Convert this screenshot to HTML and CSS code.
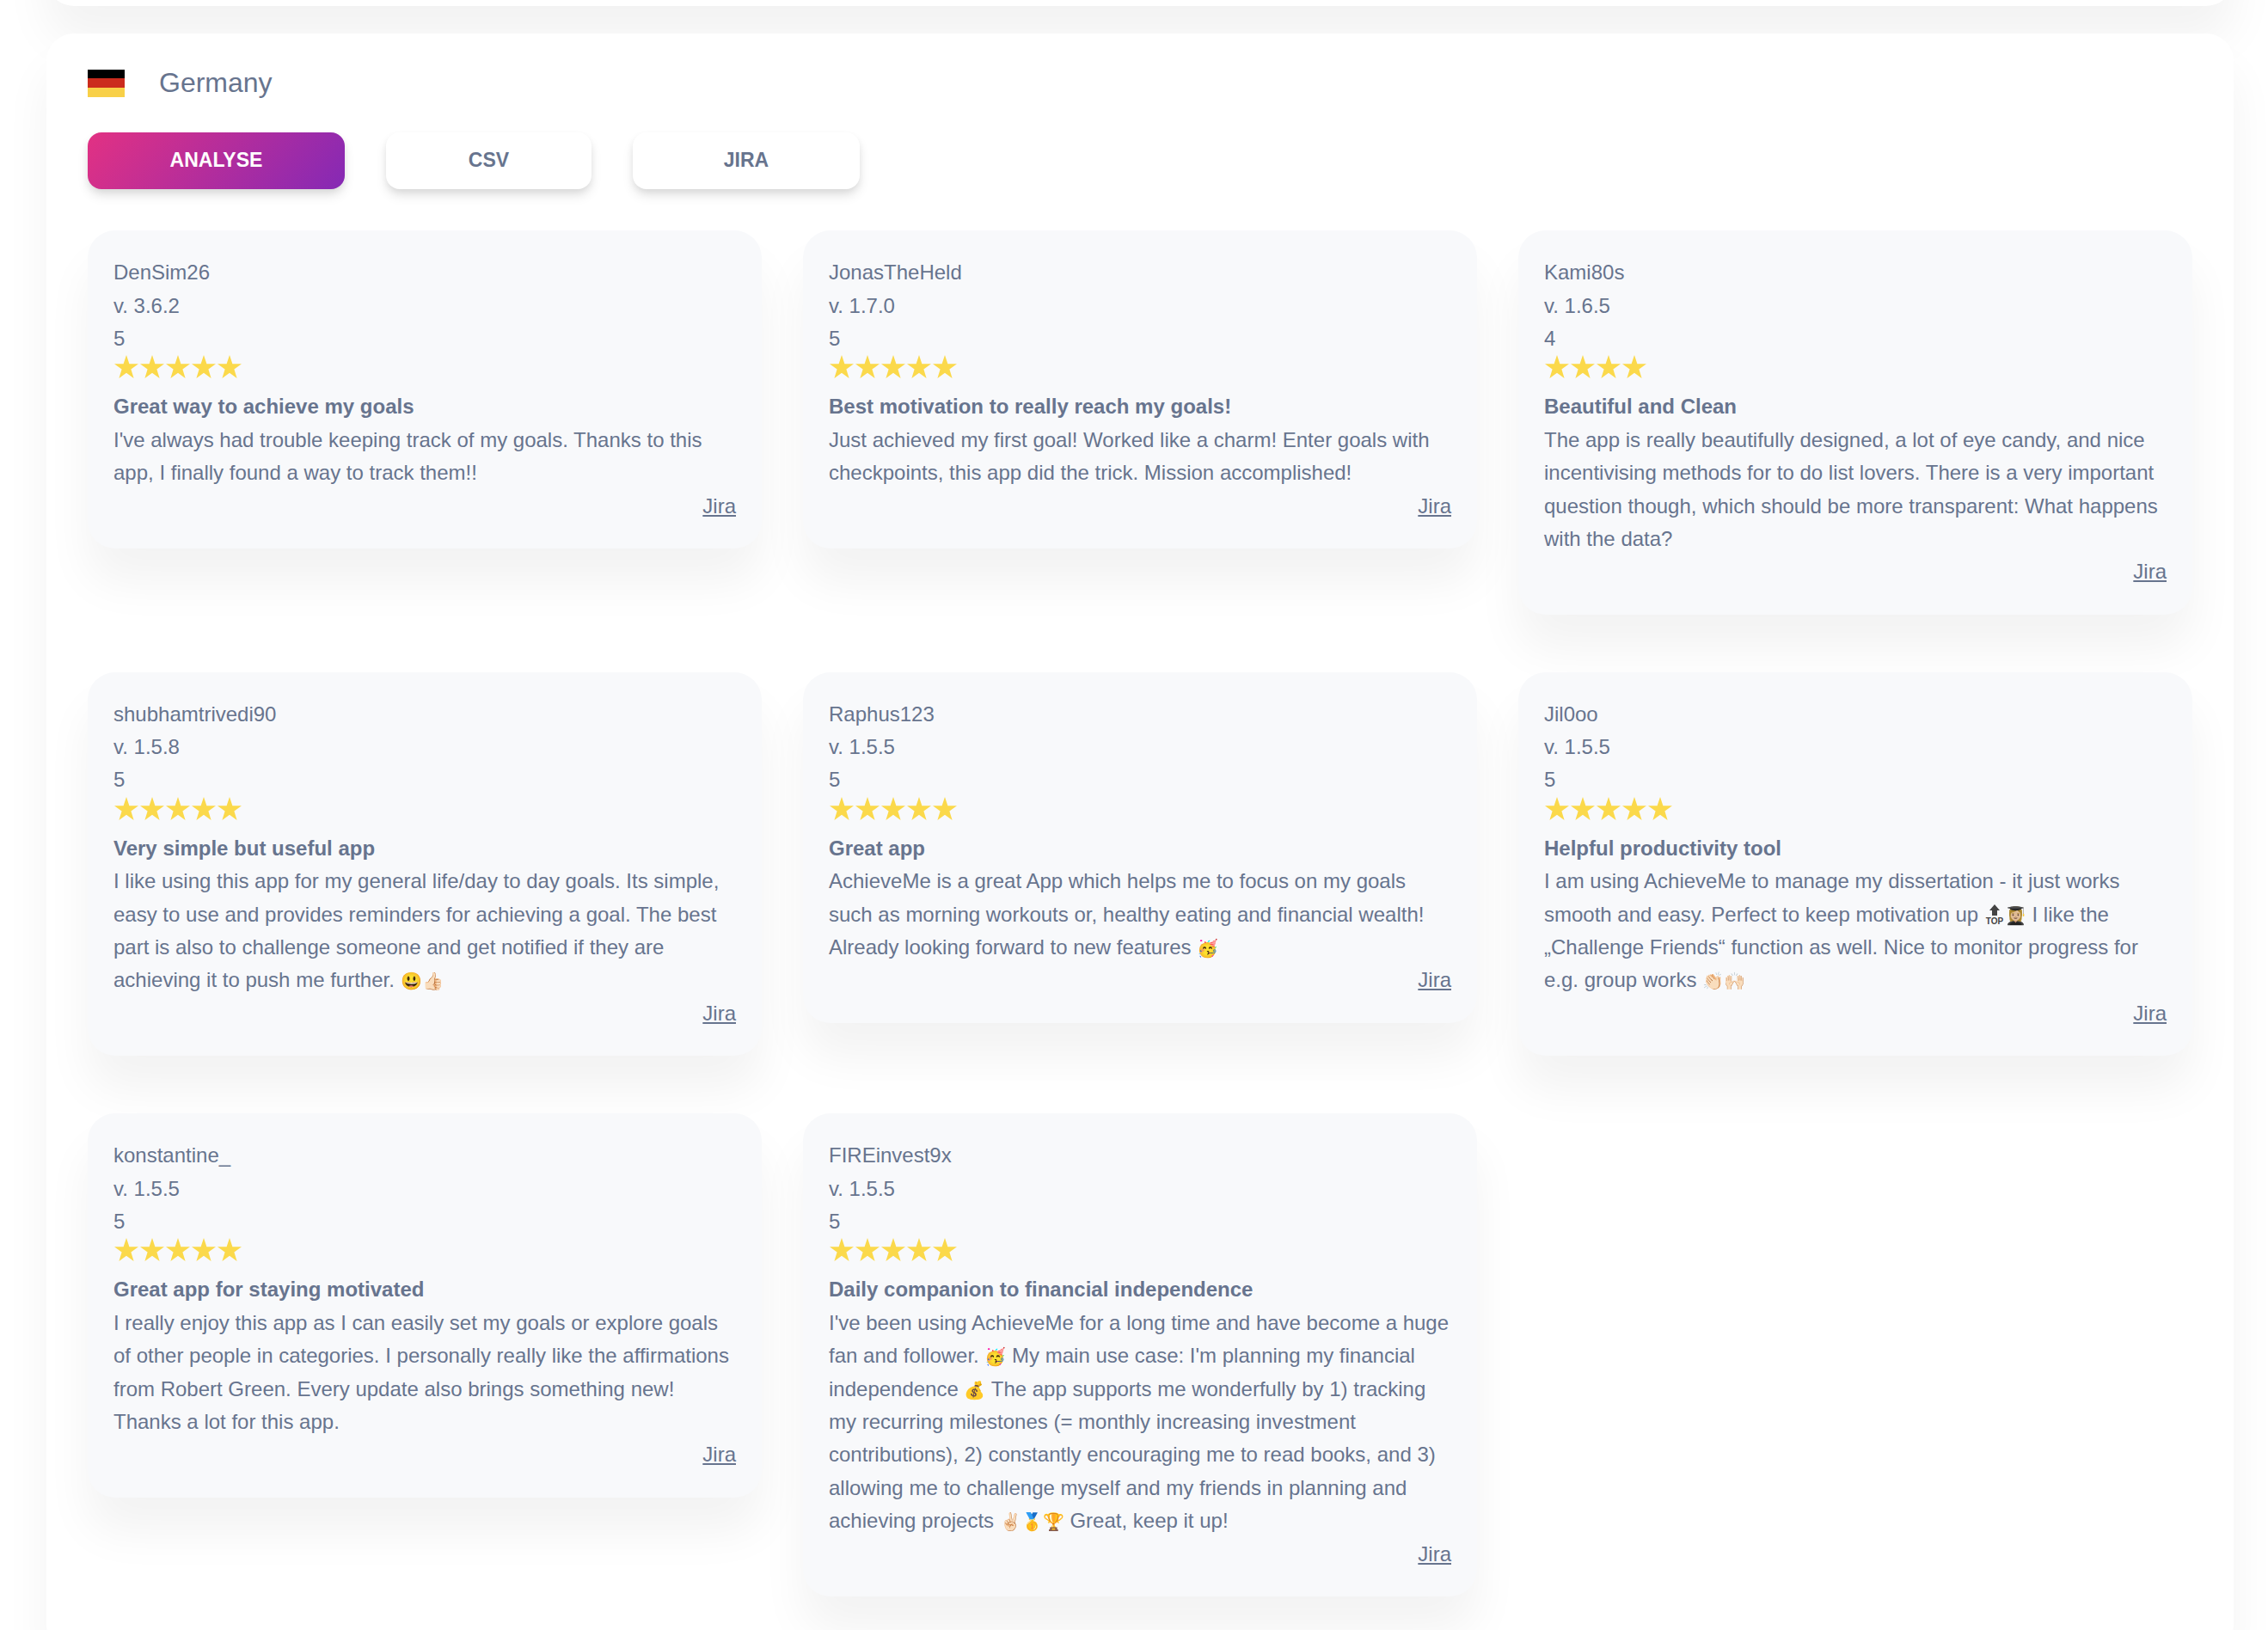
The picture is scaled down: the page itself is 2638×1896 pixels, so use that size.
FILE: index.html
```
<!DOCTYPE html>
<html lang="en">
<head>
    <meta charset="UTF-8">
    <meta name="viewport" content="width=device-width, initial-scale=1.0">
    <title>App Reviews</title>
    <link rel="stylesheet" href="styles.css">
</head>
<body>
    <svg class="sprite" aria-hidden="true">
        <symbol id="star" viewBox="0 0 28 27">
            <path d="M14 0 L17.4 10.2 H28 L19.4 16.6 L22.6 27 L14 20.7 L5.4 27 L8.6 16.6 L0 10.2 H10.6 Z"/>
        </symbol>
    </svg>

    <section class="panel panel-previous"></section>

    <section class="panel">
        <header class="country">
            <svg class="flag" viewBox="0 0 43 32" role="img" aria-label="Flag of Germany">
                <rect width="43" height="32" fill="#f8d048"/>
                <rect width="43" height="21" fill="#cb2b1d"/>
                <rect width="43" height="10" fill="#000"/>
            </svg>
            <h2 class="country-name">Germany</h2>
        </header>

        <div class="actions">
            <button class="btn btn-primary" type="button">ANALYSE</button>
            <button class="btn btn-csv" type="button">CSV</button>
            <button class="btn btn-jira" type="button">JIRA</button>
        </div>

        <div class="reviews">
            <article class="card">
                <div>DenSim26</div>
                <div>v. 3.6.2</div>
                <div>5</div>
                <div class="stars"><svg><use href="#star"/></svg><svg><use href="#star"/></svg><svg><use href="#star"/></svg><svg><use href="#star"/></svg><svg><use href="#star"/></svg></div>
                <h3 class="card-title">Great way to achieve my goals</h3>
                <p class="card-text">I've always had trouble keeping track of my goals. Thanks to this app, I finally found a way to track them!!</p>
                <div class="card-link"><a href="#">Jira</a></div>
            </article>

            <article class="card">
                <div>JonasTheHeld</div>
                <div>v. 1.7.0</div>
                <div>5</div>
                <div class="stars"><svg><use href="#star"/></svg><svg><use href="#star"/></svg><svg><use href="#star"/></svg><svg><use href="#star"/></svg><svg><use href="#star"/></svg></div>
                <h3 class="card-title">Best motivation to really reach my goals!</h3>
                <p class="card-text">Just achieved my first goal! Worked like a charm! Enter goals with checkpoints, this app did the trick. Mission accomplished!</p>
                <div class="card-link"><a href="#">Jira</a></div>
            </article>

            <article class="card">
                <div>Kami80s</div>
                <div>v. 1.6.5</div>
                <div>4</div>
                <div class="stars"><svg><use href="#star"/></svg><svg><use href="#star"/></svg><svg><use href="#star"/></svg><svg><use href="#star"/></svg></div>
                <h3 class="card-title">Beautiful and Clean</h3>
                <p class="card-text">The app is really beautifully designed, a lot of eye candy, and nice incentivising methods for to do list lovers. There is a very important question though, which should be more transparent: What happens with the data?</p>
                <div class="card-link"><a href="#">Jira</a></div>
            </article>

            <article class="card">
                <div>shubhamtrivedi90</div>
                <div>v. 1.5.8</div>
                <div>5</div>
                <div class="stars"><svg><use href="#star"/></svg><svg><use href="#star"/></svg><svg><use href="#star"/></svg><svg><use href="#star"/></svg><svg><use href="#star"/></svg></div>
                <h3 class="card-title">Very simple but useful app</h3>
                <p class="card-text">I like using this app for my general life/day to day goals. Its simple, easy to use and provides reminders for achieving a goal. The best part is also to challenge someone and get notified if they are achieving it to push me further. <span class="emoji">😃👍🏻</span></p>
                <div class="card-link"><a href="#">Jira</a></div>
            </article>

            <article class="card">
                <div>Raphus123</div>
                <div>v. 1.5.5</div>
                <div>5</div>
                <div class="stars"><svg><use href="#star"/></svg><svg><use href="#star"/></svg><svg><use href="#star"/></svg><svg><use href="#star"/></svg><svg><use href="#star"/></svg></div>
                <h3 class="card-title">Great app</h3>
                <p class="card-text">AchieveMe is a great App which helps me to focus on my goals such as morning workouts or, healthy eating and financial wealth! Already looking forward to new features <span class="emoji">🥳</span></p>
                <div class="card-link"><a href="#">Jira</a></div>
            </article>

            <article class="card">
                <div>Jil0oo</div>
                <div>v. 1.5.5</div>
                <div>5</div>
                <div class="stars"><svg><use href="#star"/></svg><svg><use href="#star"/></svg><svg><use href="#star"/></svg><svg><use href="#star"/></svg><svg><use href="#star"/></svg></div>
                <h3 class="card-title">Helpful productivity tool</h3>
                <p class="card-text">I am using AchieveMe to manage my dissertation - it just works smooth and easy. Perfect to keep motivation up <svg class="top-arrow" viewBox="0 0 24 24"><path d="M12 0 L18 7 H15 V13 H9 V7 H6 Z"/><text x="12" y="23" text-anchor="middle">TOP</text></svg><span class="emoji">👩🏼‍🎓</span> I like the „Challenge Friends“ function as well. Nice to monitor progress for e.g. group works <span class="emoji">👏🏻🙌🏻</span></p>
                <div class="card-link"><a href="#">Jira</a></div>
            </article>

            <article class="card">
                <div>konstantine_</div>
                <div>v. 1.5.5</div>
                <div>5</div>
                <div class="stars"><svg><use href="#star"/></svg><svg><use href="#star"/></svg><svg><use href="#star"/></svg><svg><use href="#star"/></svg><svg><use href="#star"/></svg></div>
                <h3 class="card-title">Great app for staying motivated</h3>
                <p class="card-text">I really enjoy this app as I can easily set my goals or explore goals of other people in categories. I personally really like the affirmations from Robert Green. Every update also brings something new! Thanks a lot for this app.</p>
                <div class="card-link"><a href="#">Jira</a></div>
            </article>

            <article class="card">
                <div>FIREinvest9x</div>
                <div>v. 1.5.5</div>
                <div>5</div>
                <div class="stars"><svg><use href="#star"/></svg><svg><use href="#star"/></svg><svg><use href="#star"/></svg><svg><use href="#star"/></svg><svg><use href="#star"/></svg></div>
                <h3 class="card-title">Daily companion to financial independence</h3>
                <p class="card-text">I've been using AchieveMe for a long time and have become a huge fan and follower. <span class="emoji">🥳</span> My main use case: I'm planning my financial independence <span class="emoji">💰</span> The app supports me wonderfully by 1) tracking my recurring milestones (= monthly increasing investment contributions), 2) constantly encouraging me to read books, and 3) allowing me to challenge myself and my friends in planning and achieving projects <span class="emoji">✌🏻🥇🏆</span> Great, keep it up!</p>
                <div class="card-link"><a href="#">Jira</a></div>
            </article>
        </div>
    </section>
</body>
</html>
```

FILE: styles.css
```
* {
    box-sizing: border-box;
}
body {
    display: flow-root;
    margin: 0;
    padding: 0 40px 32px 54px;
    background-color: #fff;
    color: #67748e;
    font-family: Helvetica, "Liberation Sans", Arial, sans-serif;
    font-size: 24px;
    line-height: 1.6;
}
.sprite {
    display: none;
}
.panel {
    background-color: #fff;
    border-radius: 32px;
    box-shadow: 0 40px 54px rgba(0, 0, 0, 0.05);
    padding: 32px 48px 66px;
    margin-bottom: 32px;
}
/* scrolled almost out of view */
.panel-previous {
    height: 400px;
    margin-top: -393px;
}
.country {
    display: flex;
    align-items: center;
    gap: 40px;
    margin-bottom: 32px;
}
.flag {
    width: 43px;
    height: 32px;
}
.country-name {
    margin: 0;
    font-size: 32px;
    font-weight: 400;
}
.actions {
    display: flex;
    gap: 48px;
    margin-bottom: 48px;
}
.btn {
    height: 66px;
    padding: 0 0 2px;
    border: none;
    border-radius: 16px;
    background-color: #fff;
    color: #67748e;
    font-family: inherit;
    font-size: 23px;
    font-weight: 700;
    cursor: pointer;
    box-shadow: 0 8px 14px -1px rgba(0, 0, 0, 0.11), 0 4px 8px -1px rgba(0, 0, 0, 0.07);
}
.btn-primary {
    width: 299px;
    background-image: linear-gradient(130deg, #e23183, #8529b5);
    color: #fff;
}
.btn-csv {
    width: 239px;
}
.btn-jira {
    width: 264px;
}
.reviews {
    display: grid;
    grid-template-columns: repeat(3, 1fr);
    align-items: start;
    column-gap: 48px;
    row-gap: 67px;
}
.card {
    background-color: #f8f9fb;
    border-radius: 32px;
    box-shadow: 0 40px 54px rgba(0, 0, 0, 0.05);
    padding: 30px;
}
.stars {
    display: flex;
    gap: 2px;
    padding-left: 1px;
    margin-bottom: 14px;
}
.stars svg {
    width: 28px;
    height: 27px;
    fill: #fbd94b;
}
.card-title {
    margin: 0;
    font-size: 24px;
    font-weight: 700;
}
.card-text {
    margin: 0;
}
/* emoji glyphs run wider than the text around them */
.emoji {
    font-size: 20px;
    line-height: 1;
}
.top-arrow {
    width: 24px;
    height: 24px;
    vertical-align: -4px;
    fill: #444;
    font-size: 10px;
    font-weight: 700;
    line-height: 1;
}
.card-link {
    text-align: right;
}
.card-link a {
    color: inherit;
}
```
